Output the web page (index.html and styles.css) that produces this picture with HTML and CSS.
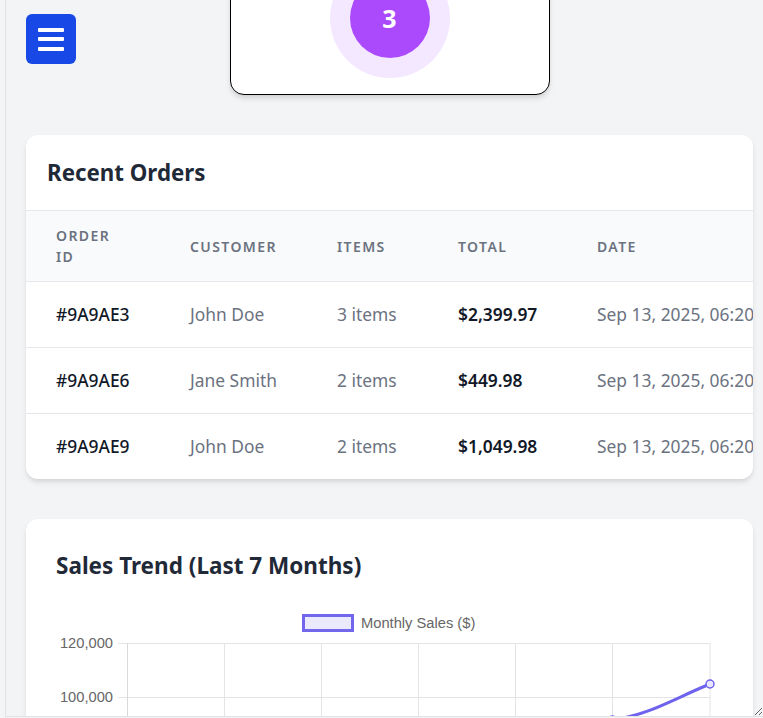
FILE: index.html
```html
<!DOCTYPE html>
<html lang="en">
<head>
<meta charset="utf-8">
<title>Dashboard</title>
<link rel="stylesheet" href="styles.css">
</head>
<body>
<div class="frame">
  <button class="menu-btn" aria-label="Menu">
    <span class="bar"></span><span class="bar"></span><span class="bar"></span>
  </button>
  <main class="content">
    <section class="stat-card">
      <div class="stat-label">Pending Orders</div>
      <div class="ring"><div class="dot">3</div></div>
    </section>

    <section class="card orders">
      <h2 class="orders-title">Recent Orders</h2>
      <div class="table-wrap">
        <table class="orders-table">
          <colgroup>
            <col class="c-id"><col class="c-cust"><col class="c-items"><col class="c-total"><col class="c-date"><col class="c-status">
          </colgroup>
          <thead>
            <tr><th>Order ID</th><th>Customer</th><th>Items</th><th>Total</th><th>Date</th><th>Status</th></tr>
          </thead>
          <tbody>
            <tr><td class="id">#9A9AE3</td><td class="muted">John Doe</td><td class="muted">3 items</td><td class="total">$2,399.97</td><td class="muted">Sep 13, 2025, 06:20 AM</td><td class="muted">Pending</td></tr>
            <tr><td class="id">#9A9AE6</td><td class="muted">Jane Smith</td><td class="muted">2 items</td><td class="total">$449.98</td><td class="muted">Sep 13, 2025, 06:20 AM</td><td class="muted">Pending</td></tr>
            <tr><td class="id">#9A9AE9</td><td class="muted">John Doe</td><td class="muted">2 items</td><td class="total">$1,049.98</td><td class="muted">Sep 13, 2025, 06:20 AM</td><td class="muted">Pending</td></tr>
          </tbody>
        </table>
      </div>
    </section>

    <section class="card sales">
      <h2 class="sales-title">Sales Trend (Last 7 Months)</h2>
      <svg class="chart" width="667" height="420" viewBox="0 0 667 420" xmlns="http://www.w3.org/2000/svg">
        <rect x="247.5" y="12.5" width="49" height="15" fill="#ebe9fc" stroke="#7166ec" stroke-width="3"/>
        <text x="305" y="24.5" class="legend">Monthly Sales ($)</text>
        <g stroke="#e4e4e4" stroke-width="1">
          <line x1="62" y1="40.5" x2="654" y2="40.5"/>
          <line x1="62" y1="94.5" x2="654" y2="94.5"/>
          <line x1="62" y1="149.5" x2="654" y2="149.5"/>
          <line x1="62" y1="203.5" x2="654" y2="203.5"/>
          <line x1="62" y1="258.5" x2="654" y2="258.5"/>
          <line x1="168.5" y1="40" x2="168.5" y2="370"/>
          <line x1="265.5" y1="40" x2="265.5" y2="370"/>
          <line x1="362.5" y1="40" x2="362.5" y2="370"/>
          <line x1="459.5" y1="40" x2="459.5" y2="370"/>
          <line x1="556.5" y1="40" x2="556.5" y2="370"/>
          <line x1="654" y1="40" x2="654" y2="370"/>
        </g>
        <line x1="71.5" y1="40" x2="71.5" y2="370" stroke="#d9d9d9" stroke-width="1"/>
        <g class="ticks">
          <text x="57" y="44.5">120,000</text>
          <text x="57" y="99">100,000</text>
          <text x="57" y="153.5">80,000</text>
          <text x="57" y="208">60,000</text>
          <text x="57" y="262.5">40,000</text>
        </g>
        <path d="M71.5 232 C110 217 130 202 168.5 192 C207 182 227 172 265.5 162 C304 152 324 152 362.5 147 C401 142 421 132 459.5 127 C498 122 518 123 556.5 117 C595 111 615 97 654 81" fill="none" stroke="#6f63ee" stroke-width="3" stroke-linecap="round"/>
        <g fill="#e9e7fc" stroke="#6f63ee" stroke-width="1.5">
          <circle cx="556.5" cy="117" r="4"/>
          <circle cx="654" cy="81" r="4"/>
        </g>
      </svg>
    </section>
  </main>
</div>
</body>
</html>
```

FILE: styles.css
```css
* { box-sizing: border-box; }

html, body {
  margin: 0;
  padding: 0;
  background: #f3f4f6;
  font-family: "Noto Sans", "Open Sans", sans-serif;
  color: #111827;
}

.frame {
  position: relative;
  margin-left: 5px;
  width: 758px;
  height: 717px;
  border-left: 1px solid #e1e2e5;
  border-bottom: 1px solid #e1e2e5;
  background: #f3f4f6;
  overflow: hidden;
  resize: both;
}

.menu-btn {
  position: absolute;
  top: 14px;
  left: 20px;
  z-index: 5;
  width: 50px;
  height: 50px;
  border: none;
  border-radius: 6px;
  background: #1849e7;
  display: flex;
  flex-direction: column;
  align-items: center;
  justify-content: center;
  gap: 5.5px;
  padding: 0;
}

.menu-btn .bar {
  display: block;
  width: 26px;
  height: 4px;
  border-radius: 1px;
  background: #ffffff;
}

.content {
  padding: 0 10px 40px 20px;
  display: flex;
  flex-direction: column;
  gap: 40px;
}

.stat-card {
  align-self: center;
  margin-top: -84px;
  width: 320px;
  height: 179px;
  background: #ffffff;
  border: 1px solid #000000;
  border-radius: 14px;
  box-shadow: 0 4px 6px -1px rgba(0,0,0,0.12), 0 2px 4px -1px rgba(0,0,0,0.06);
  display: flex;
  flex-direction: column;
  align-items: center;
  justify-content: flex-end;
  padding-bottom: 16px;
}

.stat-label {
  font-size: 14px;
  color: #6b7280;
  margin-bottom: 8px;
}

.ring {
  width: 120px;
  height: 120px;
  border-radius: 50%;
  background: #f3e8ff;
  display: flex;
  align-items: center;
  justify-content: center;
}

.dot {
  width: 80px;
  height: 80px;
  border-radius: 50%;
  background: #ab4afd;
  color: #ffffff;
  font-weight: 700;
  font-size: 25px;
  display: flex;
  align-items: center;
  justify-content: center;
}

.card {
  background: #ffffff;
  border-radius: 12px;
  box-shadow: 0 4px 6px -1px rgba(0,0,0,0.1), 0 2px 4px -1px rgba(0,0,0,0.06);
  overflow: hidden;
}

.orders-title {
  margin: 0;
  padding: 21px 21px 20px;
  font-size: 22.3px;
  line-height: 34px;
  font-weight: 700;
  color: #1f2937;
  border-bottom: 1px solid #e5e7eb;
}

.table-wrap {
  overflow: hidden;
}

.orders-table {
  border-collapse: collapse;
  table-layout: fixed;
  width: 900px;
}

.c-id { width: 134px; }
.c-cust { width: 147px; }
.c-items { width: 121px; }
.c-total { width: 139px; }
.c-date { width: 260px; }
.c-status { width: 99px; }

.orders-table th {
  background: #f9fafb;
  text-align: left;
  padding: 14px 30px;
  font-size: 14px;
  line-height: 21px;
  font-weight: 600;
  text-transform: uppercase;
  letter-spacing: 0.1em;
  color: #6b7280;
  border-bottom: 1px solid #e5e7eb;
}

.orders-table td {
  padding: 20px 30px;
  font-size: 17.4px;
  line-height: 25px;
  white-space: nowrap;
  border-bottom: 1px solid #e5e7eb;
}

.orders-table tbody tr:last-child td { border-bottom: none; }

.orders-table td.id { color: #111827; font-weight: 500; }
.orders-table td.total { color: #111827; font-weight: 600; }
.orders-table td.muted { color: #6b7280; }

.sales {
  padding: 30px;
}

.sales-title {
  margin: 0 0 20px;
  font-size: 22.5px;
  line-height: 34px;
  font-weight: 700;
  color: #1f2937;
}

.chart {
  display: block;
  font-family: "Liberation Sans", Arial, sans-serif;
}

.chart .legend {
  font-size: 14.7px;
  fill: #666666;
}

.chart .ticks text {
  font-size: 14.7px;
  fill: #666666;
  text-anchor: end;
}
```
